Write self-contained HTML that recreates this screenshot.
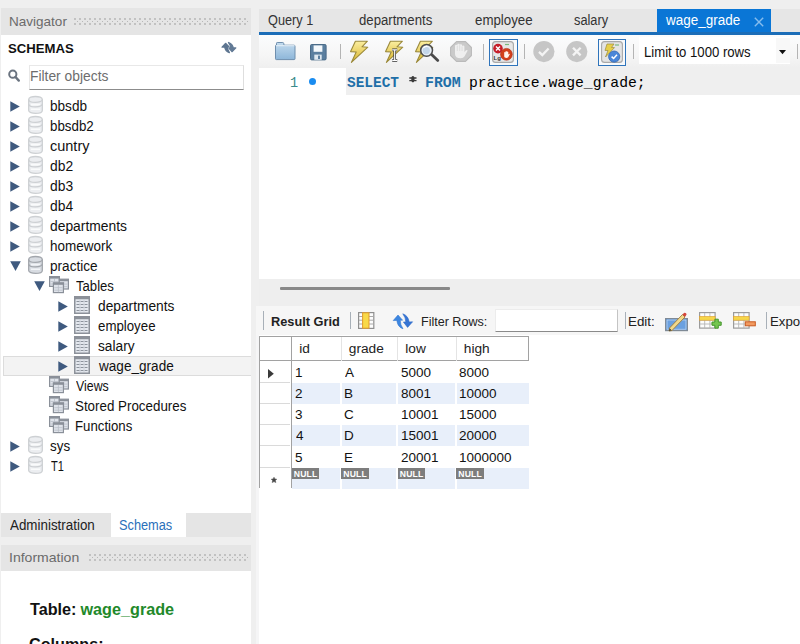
<!DOCTYPE html>
<html><head><meta charset="utf-8"><style>*{box-sizing:border-box;margin:0;padding:0}
html,body{width:800px;height:644px;overflow:hidden;background:#efefef;font-family:"Liberation Sans",sans-serif;color:#1a1a1a}
.a{position:absolute}
.t{position:absolute;white-space:pre;line-height:1;transform-origin:0 0}
svg{position:absolute;overflow:visible}
.dots{position:absolute;background-image:radial-gradient(circle at 1px 1px,#9c9c9c 0.45px,transparent 0.95px),radial-gradient(circle at 3.5px 3.5px,#b8b8b8 0.45px,transparent 0.95px);background-size:5px 5px}
</style></head><body>
<div class="a" style="left:1px;top:8px;width:250px;height:27px;background:#e5e5e5;"></div>
<div class="t" style="left:8.89px;top:15.00px;font-size:13.41px;color:#6b6b6b;transform:scaleX(1.0089);">Navigator</div>
<div class="dots" style="left:74px;top:18px;width:174px;height:8px"></div>
<div class="a" style="left:1px;top:35px;width:250px;height:478px;background:#fff;"></div>
<div class="t" style="left:7.73px;top:43.00px;font-size:12.29px;color:#111;font-weight:700;transform:scaleX(1.0700);">SCHEMAS</div>
<svg style="left:222px;top:42px" width="15" height="12"><g transform="scale(0.73,0.67)"><path d="M0.2,7.6 L5,2 L9.6,7.2 L7.2,7.2 Q7.2,11.6 10,15.8 Q4.6,14 3.8,7.4 Z" fill="#5d7590" stroke="#5d7590" stroke-width="2" stroke-linejoin="round"/><path d="M19.6,8.8 L14.6,14.4 L10.4,9 L12.8,9 Q12.8,4.8 9.8,0.8 Q15.2,2.6 16.2,9 Z" fill="#627a95" stroke="#627a95" stroke-width="2" transform="translate(-0.8,0)" stroke-linejoin="round"/></g></svg>
<svg style="left:7px;top:69px" width="14" height="14"><circle cx="5.8" cy="5.2" r="3.6" fill="none" stroke="#6b7480" stroke-width="2"/><path d="M8.5,8 L11.8,11.6" stroke="#6b7480" stroke-width="2.4" stroke-linecap="round"/></svg>
<div class="a" style="left:28.5px;top:64.5px;width:215px;height:25px;background:#fff;border:1px solid #e8e8e8;border-bottom:1.6px solid #8c8c8c;border-right:1px solid #dedede"></div>
<div class="t" style="left:30.00px;top:70.00px;font-size:13.83px;color:#6d6d6d;">Filter objects</div>
<svg style="left:10px;top:101.3px" width="10" height="11"><path d="M0.3,0.3 L9.8,5.5 L0.3,10.7Z" fill="#3f5a7f"/></svg>
<svg style="left:28px;top:96.1px" width="15" height="18"><path d="M0.7,3.4 C0.7,-0.5 14.3,-0.5 14.3,3.4 V14.4 C14.3,18.3 0.7,18.3 0.7,14.4Z" fill="#eceef1" stroke="#cdd0d3" stroke-width="1.3"/><path d="M3,8.6 H12 M3,13.3 H12" stroke="#fafbfc" stroke-width="1.6"/><path d="M0.7,3.4 C0.7,7.3 14.3,7.3 14.3,3.4 M0.7,7.9 C0.7,11.8 14.3,11.8 14.3,7.9" fill="none" stroke="#cdd0d3" stroke-width="1.2"/></svg>
<div class="t" style="left:50.34px;top:99.00px;font-size:14.11px;color:#111;transform:scaleX(0.9622);">bbsdb</div>
<svg style="left:10px;top:121.3px" width="10" height="11"><path d="M0.3,0.3 L9.8,5.5 L0.3,10.7Z" fill="#3f5a7f"/></svg>
<svg style="left:28px;top:116.1px" width="15" height="18"><path d="M0.7,3.4 C0.7,-0.5 14.3,-0.5 14.3,3.4 V14.4 C14.3,18.3 0.7,18.3 0.7,14.4Z" fill="#eceef1" stroke="#cdd0d3" stroke-width="1.3"/><path d="M3,8.6 H12 M3,13.3 H12" stroke="#fafbfc" stroke-width="1.6"/><path d="M0.7,3.4 C0.7,7.3 14.3,7.3 14.3,3.4 M0.7,7.9 C0.7,11.8 14.3,11.8 14.3,7.9" fill="none" stroke="#cdd0d3" stroke-width="1.2"/></svg>
<div class="t" style="left:50.36px;top:119.00px;font-size:14.11px;color:#111;transform:scaleX(0.9444);">bbsdb2</div>
<svg style="left:10px;top:141.3px" width="10" height="11"><path d="M0.3,0.3 L9.8,5.5 L0.3,10.7Z" fill="#3f5a7f"/></svg>
<svg style="left:28px;top:136.1px" width="15" height="18"><path d="M0.7,3.4 C0.7,-0.5 14.3,-0.5 14.3,3.4 V14.4 C14.3,18.3 0.7,18.3 0.7,14.4Z" fill="#eceef1" stroke="#cdd0d3" stroke-width="1.3"/><path d="M3,8.6 H12 M3,13.3 H12" stroke="#fafbfc" stroke-width="1.6"/><path d="M0.7,3.4 C0.7,7.3 14.3,7.3 14.3,3.4 M0.7,7.9 C0.7,11.8 14.3,11.8 14.3,7.9" fill="none" stroke="#cdd0d3" stroke-width="1.2"/></svg>
<div class="t" style="left:50.27px;top:139.00px;font-size:14.11px;color:#111;transform:scaleX(1.0270);">cuntry</div>
<svg style="left:10px;top:161.3px" width="10" height="11"><path d="M0.3,0.3 L9.8,5.5 L0.3,10.7Z" fill="#3f5a7f"/></svg>
<svg style="left:28px;top:156.1px" width="15" height="18"><path d="M0.7,3.4 C0.7,-0.5 14.3,-0.5 14.3,3.4 V14.4 C14.3,18.3 0.7,18.3 0.7,14.4Z" fill="#eceef1" stroke="#cdd0d3" stroke-width="1.3"/><path d="M3,8.6 H12 M3,13.3 H12" stroke="#fafbfc" stroke-width="1.6"/><path d="M0.7,3.4 C0.7,7.3 14.3,7.3 14.3,3.4 M0.7,7.9 C0.7,11.8 14.3,11.8 14.3,7.9" fill="none" stroke="#cdd0d3" stroke-width="1.2"/></svg>
<div class="t" style="left:50.32px;top:159.00px;font-size:14.11px;color:#111;transform:scaleX(0.9818);">db2</div>
<svg style="left:10px;top:181.3px" width="10" height="11"><path d="M0.3,0.3 L9.8,5.5 L0.3,10.7Z" fill="#3f5a7f"/></svg>
<svg style="left:28px;top:176.1px" width="15" height="18"><path d="M0.7,3.4 C0.7,-0.5 14.3,-0.5 14.3,3.4 V14.4 C14.3,18.3 0.7,18.3 0.7,14.4Z" fill="#eceef1" stroke="#cdd0d3" stroke-width="1.3"/><path d="M3,8.6 H12 M3,13.3 H12" stroke="#fafbfc" stroke-width="1.6"/><path d="M0.7,3.4 C0.7,7.3 14.3,7.3 14.3,3.4 M0.7,7.9 C0.7,11.8 14.3,11.8 14.3,7.9" fill="none" stroke="#cdd0d3" stroke-width="1.2"/></svg>
<div class="t" style="left:50.32px;top:179.00px;font-size:14.11px;color:#111;transform:scaleX(0.9818);">db3</div>
<svg style="left:10px;top:201.3px" width="10" height="11"><path d="M0.3,0.3 L9.8,5.5 L0.3,10.7Z" fill="#3f5a7f"/></svg>
<svg style="left:28px;top:196.1px" width="15" height="18"><path d="M0.7,3.4 C0.7,-0.5 14.3,-0.5 14.3,3.4 V14.4 C14.3,18.3 0.7,18.3 0.7,14.4Z" fill="#eceef1" stroke="#cdd0d3" stroke-width="1.3"/><path d="M3,8.6 H12 M3,13.3 H12" stroke="#fafbfc" stroke-width="1.6"/><path d="M0.7,3.4 C0.7,7.3 14.3,7.3 14.3,3.4 M0.7,7.9 C0.7,11.8 14.3,11.8 14.3,7.9" fill="none" stroke="#cdd0d3" stroke-width="1.2"/></svg>
<div class="t" style="left:50.32px;top:199.00px;font-size:14.11px;color:#111;transform:scaleX(0.9818);">db4</div>
<svg style="left:10px;top:221.3px" width="10" height="11"><path d="M0.3,0.3 L9.8,5.5 L0.3,10.7Z" fill="#3f5a7f"/></svg>
<svg style="left:28px;top:216.1px" width="15" height="18"><path d="M0.7,3.4 C0.7,-0.5 14.3,-0.5 14.3,3.4 V14.4 C14.3,18.3 0.7,18.3 0.7,14.4Z" fill="#eceef1" stroke="#cdd0d3" stroke-width="1.3"/><path d="M3,8.6 H12 M3,13.3 H12" stroke="#fafbfc" stroke-width="1.6"/><path d="M0.7,3.4 C0.7,7.3 14.3,7.3 14.3,3.4 M0.7,7.9 C0.7,11.8 14.3,11.8 14.3,7.9" fill="none" stroke="#cdd0d3" stroke-width="1.2"/></svg>
<div class="t" style="left:50.32px;top:219.00px;font-size:14.11px;color:#111;transform:scaleX(0.9805);">departments</div>
<svg style="left:10px;top:241.3px" width="10" height="11"><path d="M0.3,0.3 L9.8,5.5 L0.3,10.7Z" fill="#3f5a7f"/></svg>
<svg style="left:28px;top:236.1px" width="15" height="18"><path d="M0.7,3.4 C0.7,-0.5 14.3,-0.5 14.3,3.4 V14.4 C14.3,18.3 0.7,18.3 0.7,14.4Z" fill="#eceef1" stroke="#cdd0d3" stroke-width="1.3"/><path d="M3,8.6 H12 M3,13.3 H12" stroke="#fafbfc" stroke-width="1.6"/><path d="M0.7,3.4 C0.7,7.3 14.3,7.3 14.3,3.4 M0.7,7.9 C0.7,11.8 14.3,11.8 14.3,7.9" fill="none" stroke="#cdd0d3" stroke-width="1.2"/></svg>
<div class="t" style="left:50.34px;top:239.00px;font-size:14.11px;color:#111;transform:scaleX(0.9563);">homework</div>
<svg style="left:10px;top:261.2px" width="11" height="10"><path d="M0.2,0.3 L10.8,0.3 L5.5,10Z" fill="#3f5a7f"/></svg>
<svg style="left:28px;top:256.1px" width="15" height="18"><path d="M0.7,3.4 C0.7,-0.5 14.3,-0.5 14.3,3.4 V14.4 C14.3,18.3 0.7,18.3 0.7,14.4Z" fill="#d8dce2" stroke="#a2a6ac" stroke-width="1.3"/><path d="M3,8.6 H12 M3,13.3 H12" stroke="#f2f4f7" stroke-width="1.6"/><path d="M0.7,3.4 C0.7,7.3 14.3,7.3 14.3,3.4 M0.7,7.9 C0.7,11.8 14.3,11.8 14.3,7.9" fill="none" stroke="#a2a6ac" stroke-width="1.2"/></svg>
<div class="t" style="left:50.34px;top:259.00px;font-size:14.11px;color:#111;transform:scaleX(0.9625);">practice</div>
<svg style="left:34px;top:281.2px" width="11" height="10"><path d="M0.2,0.3 L10.8,0.3 L5.5,10Z" fill="#3f5a7f"/></svg>
<svg style="left:49px;top:276.3px" width="20" height="18"><rect x="0.6" y="0.6" width="9.8" height="9.8" fill="#dfe3ea" stroke="#8a9099" stroke-width="1.2"/><rect x="0.6" y="0.6" width="9.8" height="2" fill="#8a9099"/><path d="M1.5,5.5 H9.5 M1.5,8 H9.5 M5.5,3 V10" stroke="#b9bfc8" stroke-width="0.8"/><rect x="10.2" y="3.2" width="9.200000000000001" height="9.8" fill="#dfe3ea" stroke="#8a9099" stroke-width="1.2"/><rect x="10.2" y="3.2" width="9.200000000000001" height="2" fill="#8a9099"/><path d="M11.1,8.1 H18.5 M11.1,10.6 H18.5 M14.8,5.6 V12.6" stroke="#b9bfc8" stroke-width="0.8"/><rect x="4.3999999999999995" y="6.8" width="10.0" height="9.8" fill="#dfe3ea" stroke="#8a9099" stroke-width="1.2"/><rect x="4.3999999999999995" y="6.8" width="10.0" height="2" fill="#8a9099"/><path d="M5.3,11.7 H13.5 M5.3,14.2 H13.5 M9.399999999999999,9.2 V16.2" stroke="#b9bfc8" stroke-width="0.8"/></svg>
<div class="t" style="left:75.50px;top:279.00px;font-size:14.11px;color:#111;transform:scaleX(0.9300);">Tables</div>
<svg style="left:58px;top:301.3px" width="10" height="11"><path d="M0.3,0.3 L9.8,5.5 L0.3,10.7Z" fill="#3f5a7f"/></svg>
<svg style="left:74px;top:296.2px" width="16" height="18"><rect x="0.75" y="0.75" width="14.5" height="16.5" fill="#e4e8ee" stroke="#8c9199" stroke-width="1.5"/><rect x="0.75" y="0.75" width="14.5" height="2.5" fill="#8c9199"/><path d="M2.5,5.5 H13.5" stroke="#8d939c" stroke-width="1" stroke-dasharray="3.2,0.8"/><path d="M2.5,8.5 H13.5" stroke="#8d939c" stroke-width="1" stroke-dasharray="3.2,0.8"/><path d="M2.5,11.5 H13.5" stroke="#8d939c" stroke-width="1" stroke-dasharray="3.2,0.8"/><path d="M2.5,14.5 H13.5" stroke="#8d939c" stroke-width="1" stroke-dasharray="3.2,0.8"/><path d="M6,3 V16 M10,3 V16" stroke="#c9ced6" stroke-width="0.8"/></svg>
<div class="t" style="left:97.73px;top:299.00px;font-size:14.11px;color:#111;transform:scaleX(0.9740);">departments</div>
<svg style="left:58px;top:321.3px" width="10" height="11"><path d="M0.3,0.3 L9.8,5.5 L0.3,10.7Z" fill="#3f5a7f"/></svg>
<svg style="left:74px;top:316.2px" width="16" height="18"><rect x="0.75" y="0.75" width="14.5" height="16.5" fill="#e4e8ee" stroke="#8c9199" stroke-width="1.5"/><rect x="0.75" y="0.75" width="14.5" height="2.5" fill="#8c9199"/><path d="M2.5,5.5 H13.5" stroke="#8d939c" stroke-width="1" stroke-dasharray="3.2,0.8"/><path d="M2.5,8.5 H13.5" stroke="#8d939c" stroke-width="1" stroke-dasharray="3.2,0.8"/><path d="M2.5,11.5 H13.5" stroke="#8d939c" stroke-width="1" stroke-dasharray="3.2,0.8"/><path d="M2.5,14.5 H13.5" stroke="#8d939c" stroke-width="1" stroke-dasharray="3.2,0.8"/><path d="M6,3 V16 M10,3 V16" stroke="#c9ced6" stroke-width="0.8"/></svg>
<div class="t" style="left:97.76px;top:319.00px;font-size:14.11px;color:#111;transform:scaleX(0.9400);">employee</div>
<svg style="left:58px;top:341.3px" width="10" height="11"><path d="M0.3,0.3 L9.8,5.5 L0.3,10.7Z" fill="#3f5a7f"/></svg>
<svg style="left:74px;top:336.2px" width="16" height="18"><rect x="0.75" y="0.75" width="14.5" height="16.5" fill="#e4e8ee" stroke="#8c9199" stroke-width="1.5"/><rect x="0.75" y="0.75" width="14.5" height="2.5" fill="#8c9199"/><path d="M2.5,5.5 H13.5" stroke="#8d939c" stroke-width="1" stroke-dasharray="3.2,0.8"/><path d="M2.5,8.5 H13.5" stroke="#8d939c" stroke-width="1" stroke-dasharray="3.2,0.8"/><path d="M2.5,11.5 H13.5" stroke="#8d939c" stroke-width="1" stroke-dasharray="3.2,0.8"/><path d="M2.5,14.5 H13.5" stroke="#8d939c" stroke-width="1" stroke-dasharray="3.2,0.8"/><path d="M6,3 V16 M10,3 V16" stroke="#c9ced6" stroke-width="0.8"/></svg>
<div class="t" style="left:97.73px;top:339.00px;font-size:14.11px;color:#111;transform:scaleX(0.9722);">salary</div>
<div class="a" style="left:3px;top:356px;width:248px;height:20px;background:#f3f3f3;border:1px solid #dcdcdc;border-right:none"></div>
<svg style="left:58px;top:361.3px" width="10" height="11"><path d="M0.3,0.3 L9.8,5.5 L0.3,10.7Z" fill="#3f5a7f"/></svg>
<svg style="left:74px;top:356.2px" width="16" height="18"><rect x="0.75" y="0.75" width="14.5" height="16.5" fill="#e4e8ee" stroke="#8c9199" stroke-width="1.5"/><rect x="0.75" y="0.75" width="14.5" height="2.5" fill="#8c9199"/><path d="M2.5,5.5 H13.5" stroke="#8d939c" stroke-width="1" stroke-dasharray="3.2,0.8"/><path d="M2.5,8.5 H13.5" stroke="#8d939c" stroke-width="1" stroke-dasharray="3.2,0.8"/><path d="M2.5,11.5 H13.5" stroke="#8d939c" stroke-width="1" stroke-dasharray="3.2,0.8"/><path d="M2.5,14.5 H13.5" stroke="#8d939c" stroke-width="1" stroke-dasharray="3.2,0.8"/><path d="M6,3 V16 M10,3 V16" stroke="#c9ced6" stroke-width="0.8"/></svg>
<div class="t" style="left:98.70px;top:359.00px;font-size:14.11px;color:#111;transform:scaleX(0.9623);">wage_grade</div>
<svg style="left:49px;top:376.3px" width="20" height="18"><rect x="0.6" y="0.6" width="9.8" height="9.8" fill="#dfe3ea" stroke="#8a9099" stroke-width="1.2"/><rect x="0.6" y="0.6" width="9.8" height="2" fill="#8a9099"/><path d="M1.5,5.5 H9.5 M1.5,8 H9.5 M5.5,3 V10" stroke="#b9bfc8" stroke-width="0.8"/><rect x="10.2" y="3.2" width="9.200000000000001" height="9.8" fill="#dfe3ea" stroke="#8a9099" stroke-width="1.2"/><rect x="10.2" y="3.2" width="9.200000000000001" height="2" fill="#8a9099"/><path d="M11.1,8.1 H18.5 M11.1,10.6 H18.5 M14.8,5.6 V12.6" stroke="#b9bfc8" stroke-width="0.8"/><rect x="4.3999999999999995" y="6.8" width="10.0" height="9.8" fill="#dfe3ea" stroke="#8a9099" stroke-width="1.2"/><rect x="4.3999999999999995" y="6.8" width="10.0" height="2" fill="#8a9099"/><path d="M5.3,11.7 H13.5 M5.3,14.2 H13.5 M9.399999999999999,9.2 V16.2" stroke="#b9bfc8" stroke-width="0.8"/></svg>
<div class="t" style="left:75.50px;top:379.00px;font-size:14.11px;color:#111;transform:scaleX(0.8757);">Views</div>
<svg style="left:49px;top:396.3px" width="20" height="18"><rect x="0.6" y="0.6" width="9.8" height="9.8" fill="#dfe3ea" stroke="#8a9099" stroke-width="1.2"/><rect x="0.6" y="0.6" width="9.8" height="2" fill="#8a9099"/><path d="M1.5,5.5 H9.5 M1.5,8 H9.5 M5.5,3 V10" stroke="#b9bfc8" stroke-width="0.8"/><rect x="10.2" y="3.2" width="9.200000000000001" height="9.8" fill="#dfe3ea" stroke="#8a9099" stroke-width="1.2"/><rect x="10.2" y="3.2" width="9.200000000000001" height="2" fill="#8a9099"/><path d="M11.1,8.1 H18.5 M11.1,10.6 H18.5 M14.8,5.6 V12.6" stroke="#b9bfc8" stroke-width="0.8"/><rect x="4.3999999999999995" y="6.8" width="10.0" height="9.8" fill="#dfe3ea" stroke="#8a9099" stroke-width="1.2"/><rect x="4.3999999999999995" y="6.8" width="10.0" height="2" fill="#8a9099"/><path d="M5.3,11.7 H13.5 M5.3,14.2 H13.5 M9.399999999999999,9.2 V16.2" stroke="#b9bfc8" stroke-width="0.8"/></svg>
<div class="t" style="left:74.55px;top:399.00px;font-size:14.11px;color:#111;transform:scaleX(0.9466);">Stored Procedures</div>
<svg style="left:49px;top:416.3px" width="20" height="18"><rect x="0.6" y="0.6" width="9.8" height="9.8" fill="#dfe3ea" stroke="#8a9099" stroke-width="1.2"/><rect x="0.6" y="0.6" width="9.8" height="2" fill="#8a9099"/><path d="M1.5,5.5 H9.5 M1.5,8 H9.5 M5.5,3 V10" stroke="#b9bfc8" stroke-width="0.8"/><rect x="10.2" y="3.2" width="9.200000000000001" height="9.8" fill="#dfe3ea" stroke="#8a9099" stroke-width="1.2"/><rect x="10.2" y="3.2" width="9.200000000000001" height="2" fill="#8a9099"/><path d="M11.1,8.1 H18.5 M11.1,10.6 H18.5 M14.8,5.6 V12.6" stroke="#b9bfc8" stroke-width="0.8"/><rect x="4.3999999999999995" y="6.8" width="10.0" height="9.8" fill="#dfe3ea" stroke="#8a9099" stroke-width="1.2"/><rect x="4.3999999999999995" y="6.8" width="10.0" height="2" fill="#8a9099"/><path d="M5.3,11.7 H13.5 M5.3,14.2 H13.5 M9.399999999999999,9.2 V16.2" stroke="#b9bfc8" stroke-width="0.8"/></svg>
<div class="t" style="left:74.56px;top:419.00px;font-size:14.11px;color:#111;transform:scaleX(0.9367);">Functions</div>
<svg style="left:10px;top:441.3px" width="10" height="11"><path d="M0.3,0.3 L9.8,5.5 L0.3,10.7Z" fill="#3f5a7f"/></svg>
<svg style="left:28px;top:436.1px" width="15" height="18"><path d="M0.7,3.4 C0.7,-0.5 14.3,-0.5 14.3,3.4 V14.4 C14.3,18.3 0.7,18.3 0.7,14.4Z" fill="#eceef1" stroke="#cdd0d3" stroke-width="1.3"/><path d="M3,8.6 H12 M3,13.3 H12" stroke="#fafbfc" stroke-width="1.6"/><path d="M0.7,3.4 C0.7,7.3 14.3,7.3 14.3,3.4 M0.7,7.9 C0.7,11.8 14.3,11.8 14.3,7.9" fill="none" stroke="#cdd0d3" stroke-width="1.2"/></svg>
<div class="t" style="left:50.35px;top:439.00px;font-size:14.11px;color:#111;transform:scaleX(0.9500);">sys</div>
<svg style="left:10px;top:461.3px" width="10" height="11"><path d="M0.3,0.3 L9.8,5.5 L0.3,10.7Z" fill="#3f5a7f"/></svg>
<svg style="left:28px;top:456.1px" width="15" height="18"><path d="M0.7,3.4 C0.7,-0.5 14.3,-0.5 14.3,3.4 V14.4 C14.3,18.3 0.7,18.3 0.7,14.4Z" fill="#eceef1" stroke="#cdd0d3" stroke-width="1.3"/><path d="M3,8.6 H12 M3,13.3 H12" stroke="#fafbfc" stroke-width="1.6"/><path d="M0.7,3.4 C0.7,7.3 14.3,7.3 14.3,3.4 M0.7,7.9 C0.7,11.8 14.3,11.8 14.3,7.9" fill="none" stroke="#cdd0d3" stroke-width="1.2"/></svg>
<div class="t" style="left:51.30px;top:459.00px;font-size:14.11px;color:#111;transform:scaleX(0.7812);">T1</div>
<div class="a" style="left:1px;top:513px;width:250px;height:24px;background:#e5e5e5;"></div>
<div class="a" style="left:111.4px;top:513px;width:74.5px;height:24px;background:#fff;"></div>
<div class="t" style="left:9.90px;top:518.00px;font-size:14.11px;color:#222;transform:scaleX(0.9483);">Administration</div>
<div class="t" style="left:118.99px;top:518.00px;font-size:14.11px;color:#2a70ba;transform:scaleX(0.9053);">Schemas</div>
<div class="a" style="left:1px;top:545px;width:250px;height:26px;background:#e5e5e5;"></div>
<div class="t" style="left:9.24px;top:551.00px;font-size:13.27px;color:#6b6b6b;transform:scaleX(1.0585);">Information</div>
<div class="dots" style="left:88.5px;top:553.5px;width:159px;height:8px"></div>
<div class="a" style="left:1px;top:571px;width:250px;height:73px;background:#fff;"></div>
<div class="t" style="left:30.00px;top:601.00px;font-size:16.2px;color:#111;font-weight:700;">Table:</div>
<div class="t" style="left:80.50px;top:601.00px;font-size:16.2px;color:#22892a;font-weight:700;">wage_grade</div>
<div class="t" style="left:29.00px;top:636.00px;font-size:16.2px;color:#111;font-weight:700;">Columns:</div>
<div class="a" style="left:259px;top:9px;width:541px;height:23px;background:#e6e6e6;"></div>
<div class="t" style="left:267.62px;top:13.00px;font-size:14.53px;color:#333;transform:scaleX(0.8760);">Query 1</div>
<div class="t" style="left:358.89px;top:13.00px;font-size:14.53px;color:#333;transform:scaleX(0.9076);">departments</div>
<div class="t" style="left:474.83px;top:13.00px;font-size:14.53px;color:#333;transform:scaleX(0.9156);">employee</div>
<div class="t" style="left:573.92px;top:13.00px;font-size:14.53px;color:#333;transform:scaleX(0.8816);">salary</div>
<div class="a" style="left:656.6px;top:8.5px;width:114.6px;height:23.5px;background:#0a76d6;"></div>
<div class="t" style="left:665.70px;top:13.00px;font-size:14.53px;color:#fff;transform:scaleX(0.9278);">wage_grade</div>
<svg style="left:753.5px;top:17px" width="10" height="10"><path d="M0.8,0.8 L9.2,9.2 M9.2,0.8 L0.8,9.2" stroke="#86bdee" stroke-width="1.4"/></svg>
<div class="a" style="left:259px;top:32px;width:541px;height:3px;background:#1b6db8;"></div>
<div class="a" style="left:259px;top:35px;width:541px;height:33px;background:linear-gradient(#fbfcfd,#f6f6f6 60%,#efefef);"></div>
<svg style="left:275px;top:42px" width="21" height="18"><defs><linearGradient id="fg" x1="0" y1="0" x2="0" y2="1"><stop offset="0" stop-color="#c3dbee"/><stop offset="1" stop-color="#8db6d9"/></linearGradient></defs><path d="M1.5,1.2 Q1.5,0.5 2.2,0.5 H7.8 Q8.5,0.5 8.7,1.3 L9,3.2 H19 Q20,3.2 20,4.2 V16.8 Q20,17.6 19.2,17.6 H1.3 Q0.5,17.6 0.5,16.8 V3.6 Q0.5,3.2 1.5,3.2Z" fill="url(#fg)" stroke="#6f8fae" stroke-width="1"/><path d="M1,3.7 H19.5" stroke="#e6f0f8" stroke-width="1"/></svg>
<svg style="left:310px;top:43.6px" width="17" height="17"><rect x="0.5" y="0.5" width="15.6" height="15.4" rx="1.2" fill="#5b7f9f" stroke="#4a6b88" stroke-width="1"/><rect x="3.6" y="1.4" width="8.8" height="6.4" fill="#f4f8fb"/><rect x="4.3" y="10.6" width="7.4" height="5.2" fill="#dfe8f0"/><rect x="8" y="11.6" width="2" height="3.4" fill="#5b7f9f"/></svg>
<div class="a" style="left:340px;top:44px;width:1px;height:15px;background:#b4b4b4"></div>
<svg style="left:345.4px;top:35.8px" width="30" height="30"><defs><linearGradient id="bg351" x1="0" y1="0" x2="0" y2="1"><stop offset="0" stop-color="#fbeea0"/><stop offset="1" stop-color="#d9b52a"/></linearGradient></defs><path d="M10.4,5.2 L22.4,5.2 L17,10.8 L22.8,11.2 L6.4,26.4 L11.2,16 L5.6,15.6Z" fill="url(#bg351)" stroke="#9b8a3c" stroke-width="1.1" stroke-linejoin="round"/></svg>
<svg style="left:379.79999999999995px;top:35.8px" width="30" height="30"><defs><linearGradient id="bg385" x1="0" y1="0" x2="0" y2="1"><stop offset="0" stop-color="#fbeea0"/><stop offset="1" stop-color="#d9b52a"/></linearGradient></defs><path d="M10.4,5.2 L22.4,5.2 L17,10.8 L22.8,11.2 L6.4,26.4 L11.2,16 L5.6,15.6Z" fill="url(#bg385)" stroke="#9b8a3c" stroke-width="1.1" stroke-linejoin="round"/><path d="M15.5,13.5 H20.5 M18,13.5 V24 M15.5,24 H20.5" stroke="#333" stroke-width="2.6" transform="translate(-3.3,0.4)"/><path d="M15.5,13.5 H20.5 M18,13.5 V24 M15.5,24 H20.5" stroke="#fff" stroke-width="1.2" transform="translate(-3.3,0.4)"/></svg>
<svg style="left:410.4px;top:35.8px" width="30" height="30"><defs><linearGradient id="bg416" x1="0" y1="0" x2="0" y2="1"><stop offset="0" stop-color="#fbeea0"/><stop offset="1" stop-color="#d9b52a"/></linearGradient></defs><path d="M10.4,5.2 L22.4,5.2 L17,10.8 L22.8,11.2 L6.4,26.4 L11.2,16 L5.6,15.6Z" fill="url(#bg416)" stroke="#9b8a3c" stroke-width="1.1" stroke-linejoin="round"/><path d="M21.6,18.6 L27.8,24.4" stroke="#4a4a4a" stroke-width="2.8" stroke-linecap="round"/><circle cx="16.6" cy="14.3" r="5.9" fill="#e9f0f6" stroke="#4d4d4d" stroke-width="1.5"/><circle cx="16.3" cy="14.6" r="3.6" fill="#b9d0e6" opacity="0.8"/><path d="M13.5,12 Q15,10 17.5,10.5" stroke="#fff" stroke-width="1.2" fill="none"/></svg>
<svg style="left:450px;top:41.2px" width="22" height="21"><path d="M6.5,0.6 H15.5 L21.4,6.5 V14.5 L15.5,20.4 H6.5 L0.6,14.5 V6.5Z" fill="#cacaca" stroke="#bababa" stroke-width="1.1" stroke-linejoin="round"/><path d="M5,9 V5 Q5,3.8 6.2,3.8 Q7.3,3.8 7.3,5 V3.8 Q7.3,2.8 8.5,2.8 Q9.7,2.8 9.7,3.8 V4.2 Q9.7,3.2 10.9,3.2 Q12.1,3.2 12.1,4.2 V5.6 Q12.1,4.6 13.2,4.6 Q14.4,4.6 14.4,5.6 V11 L15.8,9.4 Q16.9,8.4 17.7,9.4 L14.6,15.2 Q13.4,17.2 10.8,17.2 Q5,17.2 5,13Z" fill="#efefef"/><path d="M7.3,5 V10 M9.7,4.2 V10 M12.1,5.6 V10" stroke="#d6d6d6" stroke-width="0.7"/></svg>
<div class="a" style="left:483px;top:44px;width:1px;height:16px;background:#b4b4b4"></div>
<div class="a" style="left:489px;top:39px;width:28.5px;height:27px;border:1.6px solid #2f74bb;background:#f7f9fb"></div>
<svg style="left:491.5px;top:41px" width="22" height="22"><rect x="0.6" y="0.6" width="20.8" height="20.8" rx="3" fill="#e6e6e6" stroke="#a8a8a8" stroke-width="1.1"/><path d="M13,3.5 L17,3.5" stroke="#7cb87c" stroke-width="1.2"/><circle cx="6" cy="7.6" r="4.8" fill="#c61e2a"/><path d="M4,5.6 L8,9.6 M8,5.6 L4,9.6" stroke="#fff" stroke-width="1.4"/><text x="1.5" y="18.5" font-family="Liberation Sans" font-size="6" font-weight="bold" fill="#333">Lg</text><circle cx="14.4" cy="13.3" r="5.9" fill="#d2401c" stroke="#b02a14" stroke-width="0.6"/><path d="M12.2,15.6 V11.6 Q12.2,10.9 12.9,10.9 Q13.5,10.9 13.5,11.6 V10.8 Q13.5,10.1 14.2,10.1 Q14.9,10.1 14.9,10.8 V11.2 Q14.9,10.6 15.6,10.6 Q16.3,10.6 16.3,11.3 V13.6 L17,12.9 Q17.6,12.5 17.9,13.1 L16.2,16.3 Q15.5,17 14.4,17 Q12.2,17 12.2,15.6Z" fill="#fff4ee"/></svg>
<div class="a" style="left:524px;top:44px;width:1px;height:15px;background:#b4b4b4"></div>
<svg style="left:532.5px;top:41.2px" width="22" height="22"><circle cx="10.9" cy="10.6" r="10.6" fill="#c6c6c6"/><path d="M6,10.8 L9.3,14 L15.6,7.5" fill="none" stroke="#f4f4f4" stroke-width="2.3"/></svg>
<svg style="left:566px;top:41.2px" width="22" height="22"><circle cx="10.8" cy="10.6" r="10.6" fill="#c6c6c6"/><path d="M7,6.8 L14.6,14.4 M14.6,6.8 L7,14.4" fill="none" stroke="#f4f4f4" stroke-width="2.3"/></svg>
<div class="a" style="left:597.7px;top:39px;width:28.7px;height:27px;border:1.6px solid #2f74bb;background:#f7f9fb"></div>
<svg style="left:600.5px;top:41px" width="22" height="22"><rect x="0.6" y="0.6" width="20.8" height="20.8" rx="3" fill="#e4e4e4" stroke="#a8a8a8" stroke-width="1.1"/><path d="M6,3 L13,3 L10.5,6.5 L13.5,6.6 L4.5,16 L7,9.5 L4,9.4Z" fill="#e7cf4a" stroke="#9b8a3c" stroke-width="0.7"/><path d="M14,4 L18,4" stroke="#7cb87c" stroke-width="1.2"/><circle cx="13.2" cy="15.6" r="5.6" fill="#4a86d8" stroke="#2f65b0" stroke-width="0.8"/><path d="M10.6,15.6 L12.6,17.5 L16,13.8" fill="none" stroke="#fff" stroke-width="1.5"/></svg>
<div class="a" style="left:633px;top:44px;width:1px;height:15px;background:#b4b4b4"></div>
<div class="a" style="left:638.5px;top:37px;width:151px;height:27px;background:#fff"></div>
<div class="a" style="left:776px;top:38px;width:14px;height:25px;background:#f8f8f8"></div>
<svg style="left:779px;top:50px" width="7" height="5"><path d="M0,0 H7 L3.5,4.2Z" fill="#111"/></svg>
<div class="a" style="left:797px;top:44px;width:1px;height:15px;background:#b4b4b4"></div>
<div class="t" style="left:643.63px;top:44.00px;font-size:15.08px;color:#111;transform:scaleX(0.8719);">Limit to 1000 rows</div>
<div class="a" style="left:259px;top:68px;width:541px;height:211px;background:#fff;"></div>
<div class="a" style="left:346px;top:68px;width:454px;height:26.5px;background:#efefef;"></div>
<div class="t" style="left:290.07px;top:76.00px;font-size:14.6px;color:#3a8a8a;font-family:'Liberation Mono',monospace;transform:scaleX(0.9286);">1</div>
<div class="a" style="left:309px;top:78px;width:7px;height:7px;background:#1a8cf0;border-radius:50%"></div>
<div class="t" style="left:346.51px;top:76.00px;font-size:14.6px;color:#1f6fa8;font-weight:700;font-family:'Liberation Mono',monospace;transform:scaleX(0.9902);">SELECT</div>
<svg style="left:408.8px;top:76px" width="8" height="7"><path d="M0.3,2 H7.5 M0.3,4.6 H7.5" stroke="#3a3a3a" stroke-width="1.3"/><ellipse cx="3.9" cy="3.2" rx="1.6" ry="3.1" fill="#3a3a3a"/></svg>
<div class="t" style="left:425.38px;top:76.00px;font-size:14.6px;color:#1f6fa8;font-weight:700;font-family:'Liberation Mono',monospace;transform:scaleX(1.0182);">FROM</div>
<div class="t" style="left:468.99px;top:76.00px;font-size:14.6px;color:#000;font-family:'Liberation Mono',monospace;transform:scaleX(1.0088);">practice.wage_grade;</div>
<div class="a" style="left:259px;top:279px;width:541px;height:27px;background:#eeeeee;"></div>
<div class="a" style="left:280px;top:287px;width:170px;height:3px;background:#888;border-radius:1px"></div>
<div class="a" style="left:256px;top:306px;width:544px;height:29px;background:#f6f6f6;"></div>
<div class="a" style="left:263px;top:311px;width:1px;height:19px;background:#a8b0b8"></div>
<div class="a" style="left:349.5px;top:312px;width:1px;height:17px;background:#a8b0b8"></div>
<svg style="left:358px;top:312px" width="17" height="17"><rect x="0.6" y="0.6" width="15.2" height="15.8" fill="#fdfdfd" stroke="#8f8f8f" stroke-width="1.2"/><path d="M1,4.5 H15.5 M1,8.2 H15.5 M1,12 H15.5" stroke="#a9a9a9" stroke-width="1"/><rect x="4.6" y="0.8" width="6.4" height="15.4" fill="#f8d948" stroke="#e29a2a" stroke-width="1"/></svg>
<svg style="left:393px;top:313px" width="20" height="17"><path d="M0.2,7.6 L5,2 L9.6,7.2 L7.2,7.2 Q7.2,11.6 10,15.8 Q4.6,14 3.8,7.4 Z" fill="#3d86e0" stroke="#3478d2" stroke-width="0.6" stroke-linejoin="round"/><path d="M19.6,8.8 L14.6,14.4 L10.4,9 L12.8,9 Q12.8,4.8 9.8,0.8 Q15.2,2.6 16.2,9 Z" fill="#3574d4" stroke="#2f6bc8" stroke-width="0.6" stroke-linejoin="round"/></svg>
<div class="a" style="left:495px;top:309px;width:122.5px;height:23px;background:#fff;border:1px solid #ececec;border-right:1.2px solid #c4c4c4;border-bottom:1.6px solid #8a8a8a;border-radius:1px"></div>
<div class="a" style="left:624.5px;top:312px;width:1px;height:17px;background:#a8b0b8"></div>
<svg style="left:665px;top:311px" width="24" height="21"><rect x="0.6" y="7.6" width="21.8" height="12" fill="#5c95da" stroke="#7f8a96" stroke-width="1.2"/><rect x="2" y="9" width="19" height="9.2" fill="#6aa0e0" stroke="#d9e6f5" stroke-width="0.6"/><path d="M4.5,17 L17.5,3.5 L20,6 L7,19.5 L4,20Z" fill="#f1d88a" stroke="#9a7b3c" stroke-width="0.9"/><path d="M17.5,3.5 L19,2 Q20,1.2 21,2.2 Q22,3.2 21.3,4 L20,6Z" fill="#d4443a"/><path d="M4,20 L4.8,17.6 L6.5,19.2Z" fill="#333"/></svg>
<svg style="left:698.5px;top:312px" width="25" height="18"><rect x="0.6" y="0.6" width="15.5" height="15.5" fill="#fcfcfc" stroke="#9b9b9b" stroke-width="1.2"/><path d="M1,8.2 H16 M1,12 H16 M5.7,1 V16 M10.9,1 V16" stroke="#b5b5b5" stroke-width="0.9"/><rect x="0.6" y="4.4" width="15.5" height="3.8" fill="#f6d64a" stroke="#e0a030" stroke-width="0.6"/><path d="M15.9,7.2 H19.3 V10 H22.2 V13.3 H19.3 V16.2 H15.9 V13.3 H13 V10 H15.9Z" fill="#74c650" stroke="#46962e" stroke-width="1"/></svg>
<svg style="left:733px;top:312px" width="24" height="18"><rect x="0.6" y="0.6" width="15.5" height="15.5" fill="#fcfcfc" stroke="#9b9b9b" stroke-width="1.2"/><path d="M1,8.2 H16 M1,12 H16 M5.7,1 V16 M10.9,1 V16" stroke="#b5b5b5" stroke-width="0.9"/><rect x="0.6" y="4.4" width="15.5" height="3.8" fill="#f6d64a" stroke="#e0a030" stroke-width="0.6"/><rect x="12.3" y="9.8" width="10" height="4" fill="#f29a60" stroke="#c85a20" stroke-width="1"/></svg>
<div class="a" style="left:765.5px;top:312px;width:1px;height:17px;background:#a8b0b8"></div>
<div class="t" style="left:271.46px;top:316.00px;font-size:12.29px;color:#222;font-weight:700;transform:scaleX(1.0385);">Result Grid</div>
<div class="t" style="left:421.44px;top:317.00px;font-size:11.87px;color:#222;transform:scaleX(1.0574);">Filter Rows:</div>
<div class="t" style="left:628.47px;top:317.00px;font-size:11.87px;color:#222;transform:scaleX(1.1273);">Edit:</div>
<div class="t" style="left:769.88px;top:317.00px;font-size:11.87px;color:#222;transform:scaleX(1.1154);">Export</div>
<div class="a" style="left:256px;top:335px;width:3px;height:309px;background:#f5f5f6;"></div>
<div class="a" style="left:259px;top:335px;width:541px;height:309px;background:#fff;"></div>
<div class="a" style="left:259.2px;top:335.5px;width:270.3px;height:25.0px;background:#fff;border:1px solid #a2a2a2;border-bottom:1px solid #a2a2a2"></div>
<div class="a" style="left:259.2px;top:335.5px;width:1px;height:152.5px;background:#a2a2a2"></div>
<div class="a" style="left:290.5px;top:335.5px;width:1px;height:152.5px;background:#a2a2a2"></div>
<div class="a" style="left:340.5px;top:336.5px;width:1px;height:24px;background:#e4e4e4"></div>
<div class="a" style="left:397px;top:336.5px;width:1px;height:24px;background:#e4e4e4"></div>
<div class="a" style="left:455.5px;top:336.5px;width:1px;height:24px;background:#e4e4e4"></div>
<div class="a" style="left:260.2px;top:381.5px;width:30.3px;height:1px;background:#dadada"></div>
<div class="a" style="left:292px;top:382.5px;width:47.5px;height:21px;background:#e8effa"></div>
<div class="a" style="left:341.5px;top:382.5px;width:54.5px;height:21px;background:#e8effa"></div>
<div class="a" style="left:398px;top:382.5px;width:56.5px;height:21px;background:#e8effa"></div>
<div class="a" style="left:456.5px;top:382.5px;width:72.5px;height:21px;background:#e8effa"></div>
<div class="a" style="left:260.2px;top:402.5px;width:30.3px;height:1px;background:#dadada"></div>
<div class="a" style="left:260.2px;top:423.5px;width:30.3px;height:1px;background:#dadada"></div>
<div class="a" style="left:292px;top:424.5px;width:47.5px;height:21.5px;background:#e8effa"></div>
<div class="a" style="left:341.5px;top:424.5px;width:54.5px;height:21.5px;background:#e8effa"></div>
<div class="a" style="left:398px;top:424.5px;width:56.5px;height:21.5px;background:#e8effa"></div>
<div class="a" style="left:456.5px;top:424.5px;width:72.5px;height:21.5px;background:#e8effa"></div>
<div class="a" style="left:260.2px;top:445.0px;width:30.3px;height:1px;background:#dadada"></div>
<div class="a" style="left:260.2px;top:466.5px;width:30.3px;height:1px;background:#dadada"></div>
<div class="a" style="left:292px;top:467.5px;width:47.5px;height:21px;background:#e8effa"></div>
<div class="a" style="left:341.5px;top:467.5px;width:54.5px;height:21px;background:#e8effa"></div>
<div class="a" style="left:398px;top:467.5px;width:56.5px;height:21px;background:#e8effa"></div>
<div class="a" style="left:456.5px;top:467.5px;width:72.5px;height:21px;background:#e8effa"></div>
<svg style="left:268px;top:368.5px" width="6" height="10"><path d="M0,0 L5.8,4.7 L0,9.4Z" fill="#3a3a3a"/></svg>
<svg style="left:271px;top:477px" width="6" height="6"><path d="M3,0.3 L3.9,2 L5.7,2.2 L4.4,3.5 L4.8,5.5 L3,4.6 L1.2,5.5 L1.6,3.5 L0.3,2.2 L2.1,2Z" fill="#444" stroke="#555" stroke-width="0.6"/></svg>
<div class="t" style="left:299.30px;top:342.00px;font-size:13.69px;color:#222;">id</div>
<div class="t" style="left:348.80px;top:342.00px;font-size:13.69px;color:#222;">grade</div>
<div class="t" style="left:405.30px;top:342.00px;font-size:13.69px;color:#222;">low</div>
<div class="t" style="left:463.80px;top:342.00px;font-size:13.69px;color:#222;">high</div>
<div class="t" style="left:294.77px;top:366.00px;font-size:13.13px;color:#111;transform:scaleX(1.0280);">1</div>
<div class="t" style="left:345.30px;top:366.00px;font-size:13.13px;color:#111;transform:scaleX(1.0280);">A</div>
<div class="t" style="left:400.77px;top:366.00px;font-size:13.13px;color:#111;transform:scaleX(1.0280);">5000</div>
<div class="t" style="left:459.27px;top:366.00px;font-size:13.13px;color:#111;transform:scaleX(1.0280);">8000</div>
<div class="t" style="left:294.77px;top:387.00px;font-size:13.13px;color:#111;transform:scaleX(1.0280);">2</div>
<div class="t" style="left:344.27px;top:387.00px;font-size:13.13px;color:#111;transform:scaleX(1.0280);">B</div>
<div class="t" style="left:400.77px;top:387.00px;font-size:13.13px;color:#111;transform:scaleX(1.0280);">8001</div>
<div class="t" style="left:459.27px;top:387.00px;font-size:13.13px;color:#111;transform:scaleX(1.0280);">10000</div>
<div class="t" style="left:294.77px;top:408.00px;font-size:13.13px;color:#111;transform:scaleX(1.0280);">3</div>
<div class="t" style="left:344.27px;top:408.00px;font-size:13.13px;color:#111;transform:scaleX(1.0280);">C</div>
<div class="t" style="left:400.77px;top:408.00px;font-size:13.13px;color:#111;transform:scaleX(1.0280);">10001</div>
<div class="t" style="left:459.27px;top:408.00px;font-size:13.13px;color:#111;transform:scaleX(1.0280);">15000</div>
<div class="t" style="left:295.80px;top:429.00px;font-size:13.13px;color:#111;transform:scaleX(1.0280);">4</div>
<div class="t" style="left:344.27px;top:429.00px;font-size:13.13px;color:#111;transform:scaleX(1.0280);">D</div>
<div class="t" style="left:400.77px;top:429.00px;font-size:13.13px;color:#111;transform:scaleX(1.0280);">15001</div>
<div class="t" style="left:459.27px;top:429.00px;font-size:13.13px;color:#111;transform:scaleX(1.0280);">20000</div>
<div class="t" style="left:294.77px;top:451.00px;font-size:13.13px;color:#111;transform:scaleX(1.0280);">5</div>
<div class="t" style="left:344.27px;top:451.00px;font-size:13.13px;color:#111;transform:scaleX(1.0280);">E</div>
<div class="t" style="left:400.77px;top:451.00px;font-size:13.13px;color:#111;transform:scaleX(1.0280);">20001</div>
<div class="t" style="left:459.27px;top:451.00px;font-size:13.13px;color:#111;transform:scaleX(1.0280);">1000000</div>
<div class="a" style="left:291.8px;top:468.2px;width:27.5px;height:10.6px;background:#7d7d7d"></div>
<div class="t" style="left:293.8px;top:469.6px;font-size:8.6px;font-weight:bold;color:#fff;letter-spacing:0.2px">NULL</div>
<div class="a" style="left:341.3px;top:468.2px;width:27.5px;height:10.6px;background:#7d7d7d"></div>
<div class="t" style="left:343.3px;top:469.6px;font-size:8.6px;font-weight:bold;color:#fff;letter-spacing:0.2px">NULL</div>
<div class="a" style="left:397.8px;top:468.2px;width:27.5px;height:10.6px;background:#7d7d7d"></div>
<div class="t" style="left:399.8px;top:469.6px;font-size:8.6px;font-weight:bold;color:#fff;letter-spacing:0.2px">NULL</div>
<div class="a" style="left:456.3px;top:468.2px;width:27.5px;height:10.6px;background:#7d7d7d"></div>
<div class="t" style="left:458.3px;top:469.6px;font-size:8.6px;font-weight:bold;color:#fff;letter-spacing:0.2px">NULL</div>
</body></html>
